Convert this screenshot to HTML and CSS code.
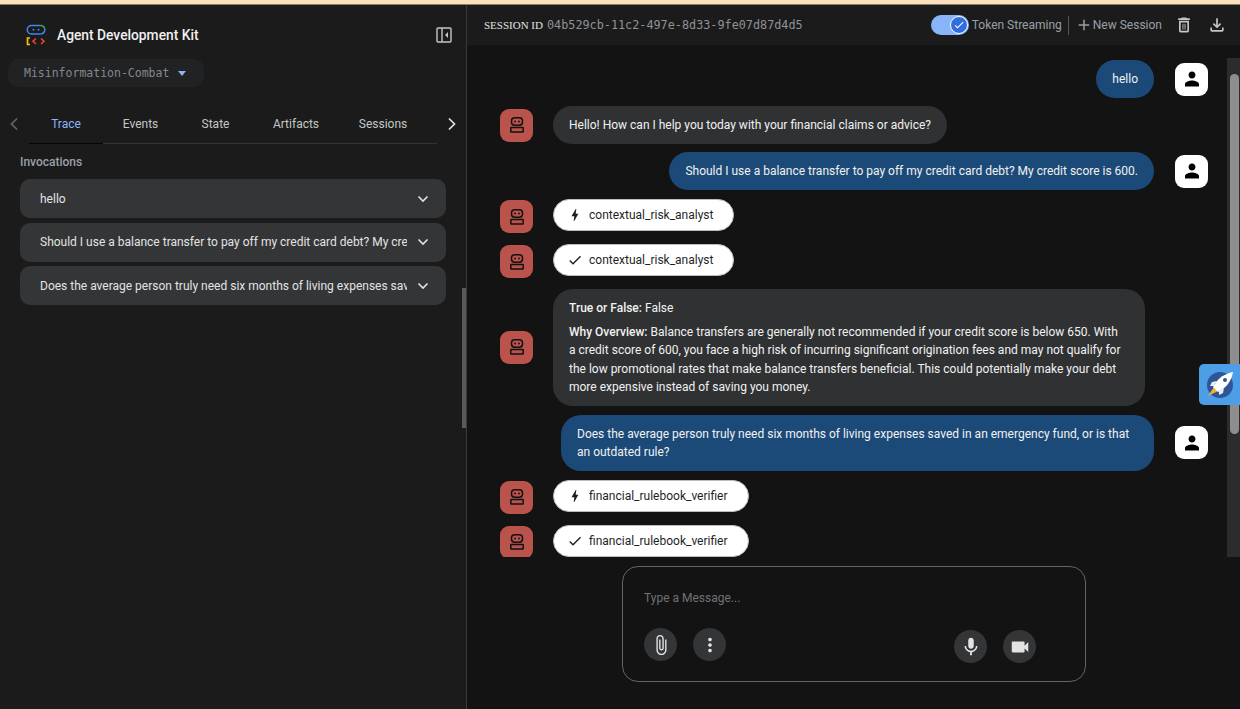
FILE: index.html
```html
<!DOCTYPE html>
<html>
<head>
    <title>Agent Development Kit</title>
    <link rel="stylesheet" href="styles.css">
</head>
<body>
<div class="top-band"></div>
<div class="app">
    <aside class="sidebar">
        <div class="brand">
            <svg class="logo" width="20" height="22" viewBox="0 0 20 22" fill="none">
                <path d="M14 1.500H5.500a4.200 4.200 0 0 0 0 8.500H14.500" stroke="#4285f4" stroke-width="1.500"/>
                <path d="M14 1.500h.5a4.200 4.200 0 0 1 4 2.800" stroke="#34a853" stroke-width="1.500"/>
                <path d="M18.500 4.300a4.200 4.200 0 0 1-4 5.700" stroke="#4285f4" stroke-width="1.500"/>
                <circle cx="7.500" cy="5.800" r="1" fill="#4285f4"/>
                <circle cx="12.500" cy="5.800" r="1" fill="#4285f4"/>
                <path d="M4 14H1.500V20.500H4" stroke="#fbbc04" stroke-width="1.700"/>
                <path d="M10 14.500L7 17.300L10 20" stroke="#ea4335" stroke-width="1.600"/>
                <path d="M15 14.500L18 17.300L15 20" stroke="#ea4335" stroke-width="1.600"/>
            </svg>
            <span class="brand-name">Agent Development Kit</span>
            <svg class="panel-toggle" width="16" height="16" viewBox="0 0 16 16" fill="none">
                <rect x="1" y="1" width="14" height="14" rx="1" stroke="#c4c7c5" stroke-width="1.400"/>
                <path d="M6 1V15" stroke="#c4c7c5" stroke-width="1.400"/>
                <path d="M12 5V11L9 8Z" fill="#c4c7c5"/>
            </svg>
        </div>
        <div class="app-select">
            <span>Misinformation-Combat</span>
            <i class="caret"></i>
        </div>
        <div class="tabs">
            <svg class="tab-arrow" width="10" height="14" viewBox="0 0 10 14" fill="none"><path d="M8 1.500L2.500 7L8 12.500" stroke="#666" stroke-width="1.700"/></svg>
            <div class="tab-list">
                <a class="tab active">Trace</a>
                <a class="tab">Events</a>
                <a class="tab">State</a>
                <a class="tab">Artifacts</a>
                <a class="tab">Sessions</a>
            </div>
            <svg class="tab-arrow" width="10" height="14" viewBox="0 0 10 14" fill="none"><path d="M2 1.500L7.500 7L2 12.500" stroke="#e3e3e3" stroke-width="1.700"/></svg>
        </div>
        <div class="invocations">
            <h3>Invocations</h3>
            <div class="invocation">
                <span>hello</span>
                <svg width="12" height="8" viewBox="0 0 12 8" fill="none"><path d="M1.500 1.500L6 6L10.500 1.500" stroke="#e3e3e3" stroke-width="1.600"/></svg>
            </div>
            <div class="invocation">
                <span>Should I use a balance transfer to pay off my credit card debt? My cre</span>
                <svg width="12" height="8" viewBox="0 0 12 8" fill="none"><path d="M1.500 1.500L6 6L10.500 1.500" stroke="#e3e3e3" stroke-width="1.600"/></svg>
            </div>
            <div class="invocation">
                <span>Does the average person truly need six months of living expenses sav</span>
                <svg width="12" height="8" viewBox="0 0 12 8" fill="none"><path d="M1.500 1.500L6 6L10.500 1.500" stroke="#e3e3e3" stroke-width="1.600"/></svg>
            </div>
        </div>
        <div class="side-thumb"></div>
    </aside>

    <main class="main">
        <header class="session-bar">
            <span class="session-label">SESSION ID</span>
            <span class="session-id">04b529cb-11c2-497e-8d33-9fe07d87d4d5</span>
            <div class="session-tools">
                <div class="toggle">
                    <div class="toggle-knob">
                        <svg width="12" height="12" viewBox="0 0 24 24" fill="#fff"><path d="M9 16.170L4.830 12l-1.420 1.410L9 19 21 7l-1.410-1.410z"/></svg>
                    </div>
                </div>
                <span class="tool-text">Token Streaming</span>
                <span class="tool-sep"></span>
                <svg width="18" height="18" viewBox="0 0 24 24" fill="#9aa0a6"><path d="M19 13h-6v6h-2v-6H5v-2h6V5h2v6h6v2z"/></svg>
                <span class="tool-text new-session">New Session</span>
                <svg class="trash" width="20" height="20" viewBox="0 0 24 24" fill="#c4c7c5"><path d="M6 19c0 1.100.9 2 2 2h8c1.100 0 2-.9 2-2V7H6v12zM8 9h8v10H8V9zm7.500-5l-1-1h-5l-1 1H5v2h14V4z"/><path d="M10.200 10.500h1.100v7h-1.100zM12.700 10.500h1.100v7h-1.100z"/></svg>
                <svg class="download" width="20" height="20" viewBox="0 0 24 24" fill="#c4c7c5"><path d="M12 16l-5-5 1.400-1.450 2.600 2.600V4h2v8.150l2.600-2.600L17 11l-5 5zM6 20c-.55 0-1.020-.2-1.410-.59C4.200 19.020 4 18.550 4 18v-3h2v3h12v-3h2v3c0 .55-.2 1.020-.59 1.410-.39.39-.86.59-1.410.59H6z"/></svg>
            </div>
        </header>

        <div class="chat-area">
            <div class="messages">
                <div class="row user">
                    <div class="bubble blue">hello</div>
                    <div class="avatar person"><svg width="24" height="24" viewBox="0 0 24 24" fill="#000"><path d="M12 11.500c1.930 0 3.500-1.570 3.500-3.500S13.930 4.500 12 4.500 8.500 6.070 8.500 8s1.570 3.500 3.500 3.500zm0 2c-2.400 0-7 1.200-7 3.500v2.500h14V17c0-2.300-4.600-3.500-7-3.500z"/></svg></div>
                </div>
                <div class="row bot">
                    <div class="avatar robot"><svg width="20" height="20" viewBox="0 0 20 20" fill="none" stroke="#111" stroke-width="1.500"><rect x="4.500" y="2.800" width="11" height="7.400" rx="3.200"/><circle cx="8" cy="6.500" r=".9" fill="#111" stroke="none"/><circle cx="12" cy="6.500" r=".9" fill="#111" stroke="none"/><rect x="3.800" y="12.500" width="12.400" height="4.500" rx=".5"/></svg></div>
                    <div class="bubble grey">Hello! How can I help you today with your financial claims or advice?</div>
                </div>
                <div class="row user">
                    <div class="bubble blue">Should I use a balance transfer to pay off my credit card debt? My credit score is 600.</div>
                    <div class="avatar person"><svg width="24" height="24" viewBox="0 0 24 24" fill="#000"><path d="M12 11.500c1.930 0 3.500-1.570 3.500-3.500S13.930 4.500 12 4.500 8.500 6.070 8.500 8s1.570 3.500 3.500 3.500zm0 2c-2.400 0-7 1.200-7 3.500v2.500h14V17c0-2.300-4.600-3.500-7-3.500z"/></svg></div>
                </div>
                <div class="row bot chip-row">
                    <div class="avatar robot"><svg width="20" height="20" viewBox="0 0 20 20" fill="none" stroke="#111" stroke-width="1.500"><rect x="4.500" y="2.800" width="11" height="7.400" rx="3.200"/><circle cx="8" cy="6.500" r=".9" fill="#111" stroke="none"/><circle cx="12" cy="6.500" r=".9" fill="#111" stroke="none"/><rect x="3.800" y="12.500" width="12.400" height="4.500" rx=".5"/></svg></div>
                    <div class="chip"><svg width="16" height="16" viewBox="0 0 24 24" fill="#1f1f1f"><path d="M11 21h-1l1-7H7.500c-.58 0-.57-.32-.38-.66.19-.34.05-.08.07-.12C8.480 10.940 10.420 7.540 13 3h1l-1 7h3.500c.49 0 .56.33.47.51l-.07.15C12.960 17.550 11 21 11 21z"/></svg>contextual_risk_analyst</div>
                </div>
                <div class="row bot chip-row">
                    <div class="avatar robot"><svg width="20" height="20" viewBox="0 0 20 20" fill="none" stroke="#111" stroke-width="1.500"><rect x="4.500" y="2.800" width="11" height="7.400" rx="3.200"/><circle cx="8" cy="6.500" r=".9" fill="#111" stroke="none"/><circle cx="12" cy="6.500" r=".9" fill="#111" stroke="none"/><rect x="3.800" y="12.500" width="12.400" height="4.500" rx=".5"/></svg></div>
                    <div class="chip"><svg width="16" height="16" viewBox="0 0 24 24" fill="#1f1f1f"><path d="M9 16.170L4.830 12l-1.420 1.410L9 19 21 7l-1.410-1.410z"/></svg>contextual_risk_analyst</div>
                </div>
                <div class="row bot tall">
                    <div class="avatar robot"><svg width="20" height="20" viewBox="0 0 20 20" fill="none" stroke="#111" stroke-width="1.500"><rect x="4.500" y="2.800" width="11" height="7.400" rx="3.200"/><circle cx="8" cy="6.500" r=".9" fill="#111" stroke="none"/><circle cx="12" cy="6.500" r=".9" fill="#111" stroke="none"/><rect x="3.800" y="12.500" width="12.400" height="4.500" rx=".5"/></svg></div>
                    <div class="bubble grey answer">
                        <p><b>True or False:</b> False</p>
                        <p><b>Why Overview:</b> Balance transfers are generally not recommended if your credit score is below 650. With a credit score of 600, you face a high risk of incurring significant origination fees and may not qualify for the low promotional rates that make balance transfers beneficial. This could potentially make your debt more expensive instead of saving you money.</p>
                    </div>
                </div>
                <div class="row user tall">
                    <div class="bubble blue wide">Does the average person truly need six months of living expenses saved in an emergency fund, or is that an outdated rule?</div>
                    <div class="avatar person"><svg width="24" height="24" viewBox="0 0 24 24" fill="#000"><path d="M12 11.500c1.930 0 3.500-1.570 3.500-3.500S13.930 4.500 12 4.500 8.500 6.070 8.500 8s1.570 3.500 3.500 3.500zm0 2c-2.400 0-7 1.200-7 3.500v2.500h14V17c0-2.300-4.600-3.500-7-3.500z"/></svg></div>
                </div>
                <div class="row bot chip-row">
                    <div class="avatar robot"><svg width="20" height="20" viewBox="0 0 20 20" fill="none" stroke="#111" stroke-width="1.500"><rect x="4.500" y="2.800" width="11" height="7.400" rx="3.200"/><circle cx="8" cy="6.500" r=".9" fill="#111" stroke="none"/><circle cx="12" cy="6.500" r=".9" fill="#111" stroke="none"/><rect x="3.800" y="12.500" width="12.400" height="4.500" rx=".5"/></svg></div>
                    <div class="chip"><svg width="16" height="16" viewBox="0 0 24 24" fill="#1f1f1f"><path d="M11 21h-1l1-7H7.500c-.58 0-.57-.32-.38-.66.19-.34.05-.08.07-.12C8.480 10.940 10.420 7.540 13 3h1l-1 7h3.500c.49 0 .56.33.47.51l-.07.15C12.960 17.550 11 21 11 21z"/></svg>financial_rulebook_verifier</div>
                </div>
                <div class="row bot chip-row">
                    <div class="avatar robot"><svg width="20" height="20" viewBox="0 0 20 20" fill="none" stroke="#111" stroke-width="1.500"><rect x="4.500" y="2.800" width="11" height="7.400" rx="3.200"/><circle cx="8" cy="6.500" r=".9" fill="#111" stroke="none"/><circle cx="12" cy="6.500" r=".9" fill="#111" stroke="none"/><rect x="3.800" y="12.500" width="12.400" height="4.500" rx=".5"/></svg></div>
                    <div class="chip"><svg width="16" height="16" viewBox="0 0 24 24" fill="#1f1f1f"><path d="M9 16.170L4.830 12l-1.420 1.410L9 19 21 7l-1.410-1.410z"/></svg>financial_rulebook_verifier</div>
                </div>
            </div>
            <div class="scroll-track"><div class="scroll-thumb"></div></div>
        </div>

        <div class="composer">
            <div class="placeholder">Type a Message...</div>
            <div class="composer-actions">
                <button class="round"><svg width="22" height="22" viewBox="0 0 24 24" fill="#e3e3e3"><path d="M16.500 6v11.500c0 2.210-1.790 4-4 4s-4-1.790-4-4V5c0-1.380 1.120-2.500 2.500-2.500s2.500 1.120 2.500 2.500v10.500c0 .55-.45 1-1 1s-1-.45-1-1V6H10v9.500c0 1.380 1.120 2.500 2.500 2.500s2.500-1.120 2.500-2.500V5c0-2.210-1.790-4-4-4S7 2.790 7 5v12.500c0 3.040 2.460 5.500 5.500 5.500s5.500-2.460 5.500-5.500V6h-1.500z"/></svg></button>
                <button class="round"><svg width="22" height="22" viewBox="0 0 24 24" fill="#e3e3e3"><path d="M12 8c1.100 0 2-.9 2-2s-.9-2-2-2-2 .9-2 2 .9 2 2 2zm0 2c-1.100 0-2 .9-2 2s.9 2 2 2 2-.9 2-2-.9-2-2-2zm0 6c-1.100 0-2 .9-2 2s.9 2 2 2 2-.9 2-2-.9-2-2-2z"/></svg></button>
                <button class="round media first-media"><svg width="22" height="22" viewBox="0 0 24 24" fill="#e3e3e3"><path d="M12 14c1.660 0 2.990-1.340 2.990-3L15 5c0-1.660-1.340-3-3-3S9 3.340 9 5v6c0 1.660 1.340 3 3 3zm5.300-3c0 3-2.540 5.100-5.300 5.100S6.700 14 6.700 11H5c0 3.410 2.720 6.230 6 6.720V21h2v-3.280c3.280-.48 6-3.300 6-6.720h-1.700z"/></svg></button>
                <button class="round media"><svg width="22" height="22" viewBox="0 0 24 24" fill="#e3e3e3"><path d="M17 10.500V7c0-.55-.45-1-1-1H4c-.55 0-1 .45-1 1v10c0 .55.45 1 1 1h12c.55 0 1-.45 1-1v-3.500l4 4v-11l-4 4z"/></svg></button>
            </div>
        </div>
    </main>
</div>

<div class="rocket">
    <svg width="30" height="30" viewBox="0 0 30 30">
        <circle cx="15" cy="15" r="13" fill="#2f5597"/>
        <path d="M3 26L9 17L13 21Z" fill="#f2b134"/>
        <path d="M8 17L12 11C16 6 22 3.500 28 2C27 8 24 14 19 18L13 22Z" fill="#fff"/>
        <path d="M12 11L7 12L5 16L9 16Z" fill="#e8eef8"/>
        <path d="M19 18L18 23L14 25L14 21Z" fill="#e8eef8"/>
        <circle cx="20" cy="10" r="2" fill="#2f5597"/>
    </svg>
</div>
</body>
</html>
```

FILE: styles.css
```css
* {
    margin: 0;
    padding: 0;
    box-sizing: border-box;
}

html, body {
    height: 100%;
    overflow: hidden;
}

body {
    position: relative;
    display: flex;
    flex-direction: column;
    background: #131314;
    font-family: 'Roboto', 'Liberation Sans', sans-serif;
    font-size: 12px;
    color: #e3e3e3;
}

.top-band {
    height: 5px;
    flex: none;
    background: #fcdfbd;
    border-bottom: 1px solid #8a7c68;
}

.app {
    flex: 1;
    display: flex;
    min-height: 0;
}

/* sidebar */
.sidebar {
    position: relative;
    width: 467px;
    flex: none;
    background: #1b1b1c;
    border-right: 1px solid #3a3a3c;
}

.brand {
    display: flex;
    align-items: center;
    height: 54px;
    padding: 6px 14px 0 26px;
}

.brand .logo {
    margin-right: 11px;
}

.brand-name {
    flex: 1;
    font-size: 13.8px;
    font-weight: 500;
    color: #f0f0f0;
}

.app-select {
    display: flex;
    align-items: center;
    height: 28px;
    width: 196px;
    margin-left: 8px;
    padding-left: 16px;
    background: #212224;
    border-radius: 10px;
    font-family: 'DejaVu Sans Mono', monospace;
    font-size: 11.5px;
    color: #85888c;
}

.caret {
    margin-left: 9px;
    border-left: 4.5px solid transparent;
    border-right: 4.5px solid transparent;
    border-top: 5px solid #8ab4f8;
}

.tabs {
    display: flex;
    align-items: center;
    height: 40px;
    margin-top: 17px;
    padding-left: 9px;
}

.tab-list {
    display: flex;
    flex: none;
    width: 408px;
    height: 40px;
    margin: 0 10px;
    border-bottom: 1px solid #333;
}

.tab {
    display: flex;
    align-items: center;
    justify-content: center;
    font-size: 12px;
    color: #c4c7c5;
}

.tab:nth-child(1) { width: 74px; }
.tab:nth-child(2) { width: 75px; }
.tab:nth-child(3) { width: 75px; }
.tab:nth-child(4) { width: 86px; }
.tab:nth-child(5) { width: 88px; }

.tab.active {
    color: #8ab4f8;
    border-bottom: 1px solid #050505;
    margin-bottom: -1px;
}

.tab-arrow {
    flex: none;
}

.invocations {
    padding: 11px 20px 0;
}

.invocations h3 {
    margin-bottom: 10px;
    font-size: 12px;
    font-weight: 500;
    color: #9aa0a6;
}

.invocation {
    display: flex;
    align-items: center;
    justify-content: space-between;
    height: 39px;
    margin-bottom: 4.500px;
    padding: 0 17px 0 20px;
    background: #333537;
    border-radius: 10px;
}

.invocation span {
    flex: none;
    width: 367px;
    overflow: hidden;
    white-space: nowrap;
}

.side-thumb {
    position: absolute;
    right: 0;
    top: 283px;
    width: 4px;
    height: 140px;
    background: #5a5a5a;
}

/* main column */
.main {
    flex: 1;
    display: flex;
    flex-direction: column;
    min-width: 0;
}

.session-bar {
    display: flex;
    align-items: center;
    height: 40px;
    flex: none;
    padding: 0 13px 0 17px;
    background: #1b1b1c;
}

.session-label {
    font-family: 'Liberation Serif', serif;
    font-size: 11px;
    color: #e3e3e3;
    margin-right: 4px;
}

.session-id {
    font-family: 'DejaVu Sans Mono', monospace;
    font-size: 11.8px;
    color: #8f9296;
}

.session-tools {
    display: flex;
    align-items: center;
    margin-left: auto;
}

.toggle {
    position: relative;
    width: 38px;
    height: 20px;
    background: #8ab4f8;
    border-radius: 10px;
}

.toggle-knob {
    position: absolute;
    right: 1px;
    top: 1px;
    width: 18px;
    height: 18px;
    display: flex;
    align-items: center;
    justify-content: center;
    background: #2f6de0;
    border: 1px solid #fff;
    border-radius: 50%;
}

.tool-text {
    font-size: 12px;
    color: #9aa0a6;
    margin-left: 3px;
}

.tool-sep {
    width: 1px;
    height: 19px;
    margin: 0 6px 0 6px;
    background: #555;
}

.new-session {
    margin-left: 0;
}

.trash {
    margin-left: 12px;
}

.download {
    margin-left: 13px;
}

/* chat */
.chat-area {
    flex: 1;
    display: flex;
    min-height: 0;
    background: #131314;
}

.messages {
    flex: 1;
    padding: 15px 19px 0 33px;
    overflow: hidden;
}

.row {
    display: flex;
    align-items: center;
    padding-bottom: 8px;
}

.row.user {
    justify-content: flex-end;
}

.row.tall {
    padding-top: 1px;
}

.chip-row {
    padding-top: 2px;
    padding-bottom: 10px;
}

.avatar {
    width: 33px;
    height: 33px;
    flex: none;
    display: flex;
    align-items: center;
    justify-content: center;
    border-radius: 9px;
}

.avatar.person {
    background: #fff;
    margin-left: 21px;
}

.avatar.robot {
    background: #b9534b;
    margin-right: 20px;
}

.bubble {
    min-height: 38px;
    display: flex;
    align-items: center;
    padding: 1px 16px 0;
    line-height: 18.500px;
    border-radius: 20px;
    color: #f1f1f1;
}

.bubble.blue {
    background: #1c4a78;
}

.bubble.grey {
    background: #303133;
}

.bubble.wide {
    width: 593px;
    min-height: 56px;
}

.answer {
    display: block;
    width: 592px;
    padding: 10px 22px 9px 16px;
}

.answer p + p {
    margin-top: 5px;
}

.answer b {
    font-weight: 500;
}

.chip {
    display: flex;
    align-items: center;
    height: 32px;
    margin-top: -3px;
    padding: 0 20px 0 13px;
    background: #fff;
    border: 1px solid #bdbdbd;
    border-radius: 16px;
    color: #1f1f1f;
}

.chip svg {
    margin-right: 6px;
}

.scroll-track {
    position: relative;
    width: 13px;
    flex: none;
    margin-top: 13px;
    background: #2c2c2d;
}

.scroll-thumb {
    position: absolute;
    left: 3px;
    top: 16px;
    width: 9px;
    height: 360px;
    border-radius: 5px;
    background: #8e8e8e;
}

/* composer */
.composer {
    width: 464px;
    height: 116px;
    flex: none;
    margin: 9px 0 27px 155px;
    padding: 23px 21px 0;
    border: 1px solid #636466;
    border-radius: 16px;
}

.placeholder {
    color: #6f7276;
    line-height: 16px;
}

.composer-actions {
    display: flex;
    margin-top: 22px;
}

.round {
    width: 33px;
    height: 33px;
    margin-right: 16px;
    display: flex;
    align-items: center;
    justify-content: center;
    border: none;
    border-radius: 50%;
    background: #333537;
}

.round.media {
    margin-top: 2px;
}

.first-media {
    margin-left: 212px;
}

.rocket {
    position: absolute;
    right: 0;
    top: 364px;
    width: 41px;
    height: 41px;
    display: flex;
    align-items: center;
    justify-content: center;
    background: #4c9fe6;
    border-radius: 5px 0 0 5px;
}
```
